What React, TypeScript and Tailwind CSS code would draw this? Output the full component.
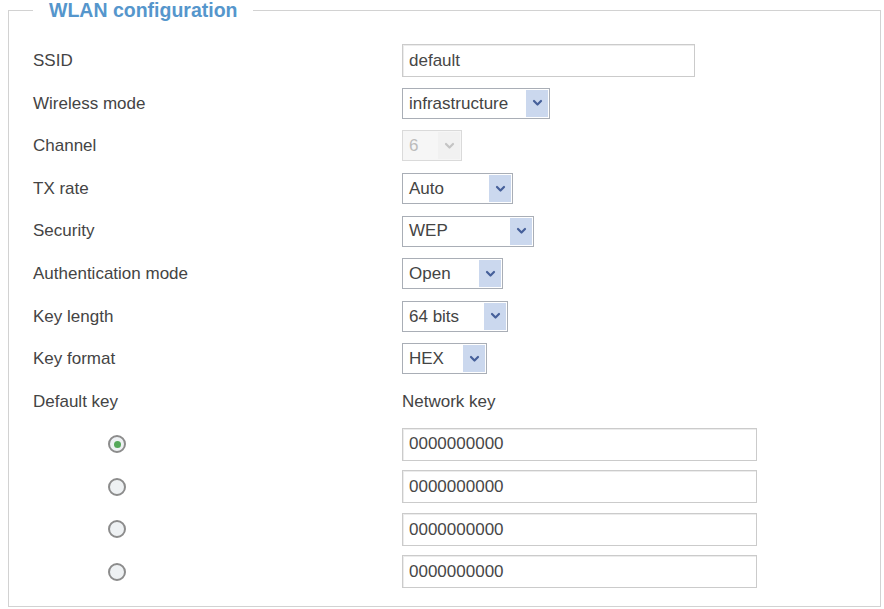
import React from 'react';

const font = { fontFamily: '"Liberation Sans", Arial, sans-serif' };

function Chevron({ muted = false }: { muted?: boolean }) {
  return (
    <svg width="11" height="8" viewBox="0 0 11 8" fill="none">
      <path
        d="M2 2 L5.5 5.5 L9 2"
        stroke={muted ? '#c4c4c4' : '#46609a'}
        strokeWidth="2.2"
        strokeLinecap="round"
        strokeLinejoin="round"
      />
    </svg>
  );
}

interface SelectProps {
  value: string;
  width: string;
  disabled?: boolean;
}

function FakeSelect({ value, width, disabled = false }: SelectProps) {
  return (
    <div
      className={`${width} h-[31px] flex items-stretch border ${
        disabled ? 'border-[#dadada] bg-[#f6f6f6]' : 'border-[#a9aeb6] bg-white'
      }`}
    >
      <span
        className={`flex-1 flex items-center pl-[6px] text-[17px] whitespace-nowrap overflow-hidden ${
          disabled ? 'text-[#bcbcbc]' : 'text-[#444]'
        }`}
      >
        {value}
      </span>
      <span
        className={`w-[22px] m-[1px] flex items-center justify-center ${
          disabled ? 'bg-[#f1f1f1]' : 'bg-[#cbd8ee]'
        }`}
      >
        <Chevron muted={disabled} />
      </span>
    </div>
  );
}

function TextBox({ value, width }: { value: string; width: string }) {
  return (
    <div
      className={`${width} h-[33px] flex items-center pl-[6px] border border-[#cbcbcb] shadow-[inset_1px_1px_0_#ececec] bg-white text-[17px] text-[#474747]`}
    >
      {value}
    </div>
  );
}

function Radio({ checked = false }: { checked?: boolean }) {
  return (
    <span className="w-[18px] h-[18px] rounded-full border-2 border-[#8c8c8c] bg-[#eef1f3] flex items-center justify-center">
      {checked && <span className="w-[7px] h-[7px] rounded-full bg-[#55a85a]" />}
    </span>
  );
}

function Row({ label, children }: { label?: React.ReactNode; children: React.ReactNode }) {
  return (
    <div className="h-[42.6px] grid grid-cols-[369px_1fr] items-center">
      <div className="text-[17px] text-[#444] flex items-center">{label}</div>
      <div className="flex items-center">{children}</div>
    </div>
  );
}

export default function App() {
  const keys = [true, false, false, false];

  return (
    <div className="w-[884px] h-[609px] bg-white" style={font}>
      <fieldset className="ml-2 w-[873px] h-[607px] border border-[#d2d2d2] pl-[24px] pt-[19.5px] pb-3">
        <legend className="px-4 text-[19.5px] leading-[20px] font-bold text-[#5596cc]">
          WLAN configuration
        </legend>

        <Row label="SSID">
          <TextBox value="default" width="w-[293px]" />
        </Row>
        <Row label="Wireless mode">
          <FakeSelect value="infrastructure" width="w-[148px]" />
        </Row>
        <Row label="Channel">
          <FakeSelect value="6" width="w-[60px]" disabled />
        </Row>
        <Row label="TX rate">
          <FakeSelect value="Auto" width="w-[111px]" />
        </Row>
        <Row label="Security">
          <FakeSelect value="WEP" width="w-[132px]" />
        </Row>
        <Row label="Authentication mode">
          <FakeSelect value="Open" width="w-[101px]" />
        </Row>
        <Row label="Key length">
          <FakeSelect value="64 bits" width="w-[106px]" />
        </Row>
        <Row label="Key format">
          <FakeSelect value="HEX" width="w-[85px]" />
        </Row>
        <Row label="Default key">
          <span className="text-[17px] text-[#444]">Network key</span>
        </Row>

        {keys.map((checked, i) => (
          <Row key={i} label={<span className="ml-[75px]"><Radio checked={checked} /></span>}>
            <TextBox value="0000000000" width="w-[355px]" />
          </Row>
        ))}
      </fieldset>
    </div>
  );
}
